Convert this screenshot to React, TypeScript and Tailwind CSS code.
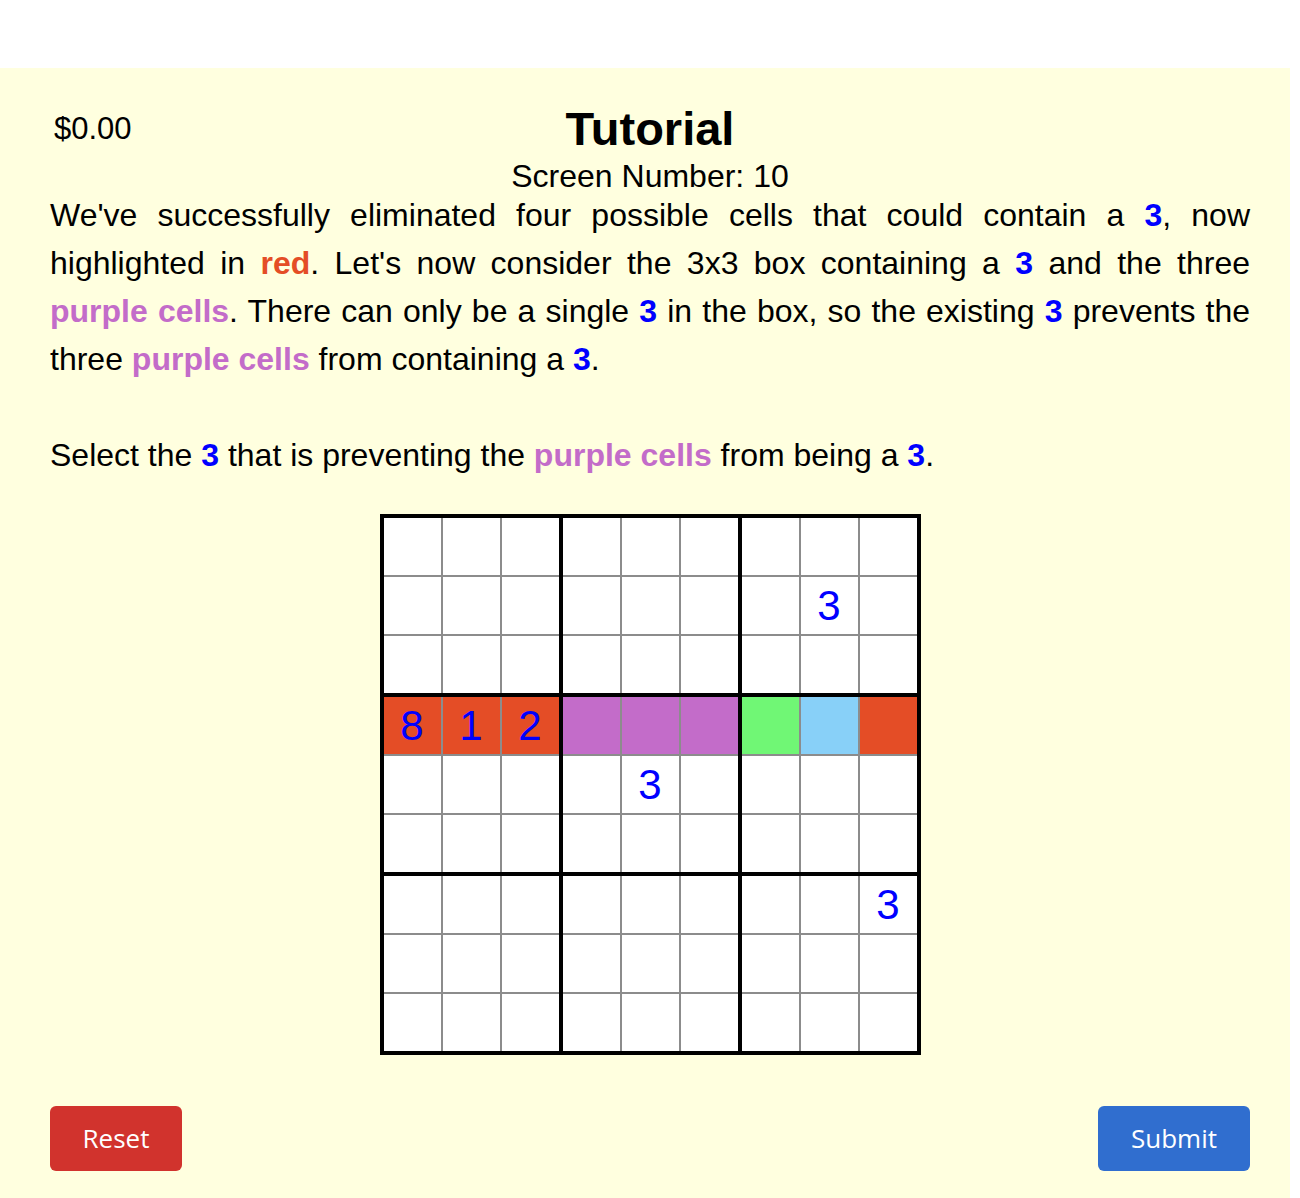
import React from "react";

type Cell = { v?: string; bg?: string };

const RED = "bg-[#e44d26]";
const PURPLE = "bg-[#c36cc9]";

// board[row][col]
const board: Cell[][] = Array.from({ length: 9 }, () =>
  Array.from({ length: 9 }, () => ({} as Cell))
);
board[1][7] = { v: "3" };
board[3][0] = { v: "8", bg: RED };
board[3][1] = { v: "1", bg: RED };
board[3][2] = { v: "2", bg: RED };
board[3][3] = { bg: PURPLE };
board[3][4] = { bg: PURPLE };
board[3][5] = { bg: PURPLE };
board[3][6] = { bg: "bg-[#70f775]" };
board[3][7] = { bg: "bg-[#88d0f8]" };
board[3][8] = { bg: RED };
board[4][4] = { v: "3" };
board[6][8] = { v: "3" };

const Three = () => <b className="text-[#0000ff]">3</b>;
const Purple = () => <b className="text-[#c36cc9]">purple cells</b>;

function Box({ br, bc }: { br: number; bc: number }) {
  const cells = [];
  for (let r = 0; r < 3; r++) {
    for (let c = 0; c < 3; c++) {
      const cell = board[br * 3 + r][bc * 3 + c];
      cells.push(
        <div
          key={`${r}-${c}`}
          className={`flex h-[57px] w-[57px] items-center justify-center text-[42px] text-[#0000ff] ${cell.bg ?? "bg-white"}`}
        >
          {cell.v}
        </div>
      );
    }
  }
  return <div className="grid grid-cols-3 gap-[2px] bg-[#8c8c8c]">{cells}</div>;
}

export default function App() {
  const boxes = [];
  for (let br = 0; br < 3; br++) {
    for (let bc = 0; bc < 3; bc++) {
      boxes.push(<Box key={`${br}-${bc}`} br={br} bc={bc} />);
    }
  }

  return (
    <div className="min-h-[1198px] bg-white pt-[68px] font-['Liberation_Sans',Arial,sans-serif] text-black">
      <div className="w-[1290px] min-h-[1130px] bg-[#ffffdf] pl-[50px] pr-[40px] pt-[33px] pb-[27px]">
        {/* Header */}
        <div className="grid grid-cols-[1fr_auto_1fr] items-center">
          <div className="pl-1 text-[31px] leading-[56px]">$0.00</div>
          <h1 className="text-[47px] font-bold leading-[56px]">Tutorial</h1>
          <div />
        </div>
        <div className="text-center text-[32px] leading-[38px]">Screen Number: 10</div>

        {/* Instructions */}
        <p className="-mt-1 text-justify text-[32px] leading-[48px]">
          We've successfully eliminated four possible cells that could contain a <Three />, now
          highlighted in <b className="text-[#e44d26]">red</b>. Let's now consider the 3x3 box
          containing a <Three /> and the three <Purple />. There can only be a single <Three /> in
          the box, so the existing <Three /> prevents the three <Purple /> from containing a{" "}
          <Three />.
        </p>
        <p className="mt-[48px] text-[32px] leading-[48px]">
          Select the <Three /> that is preventing the <Purple /> from being a <Three />.
        </p>

        {/* Board */}
        <div className="mt-[35px] flex justify-center">
          <div className="grid grid-cols-3 gap-[4px] border-4 border-black bg-black">{boxes}</div>
        </div>

        {/* Buttons */}
        <div className="mt-[51px] flex justify-between font-['Open_Sans',sans-serif] text-[26px] text-white">
          <button className="h-[65px] w-[132px] rounded-[6px] bg-[#d1332d]">Reset</button>
          <button className="h-[65px] w-[152px] rounded-[6px] bg-[#306ecf]">Submit</button>
        </div>
      </div>
    </div>
  );
}
